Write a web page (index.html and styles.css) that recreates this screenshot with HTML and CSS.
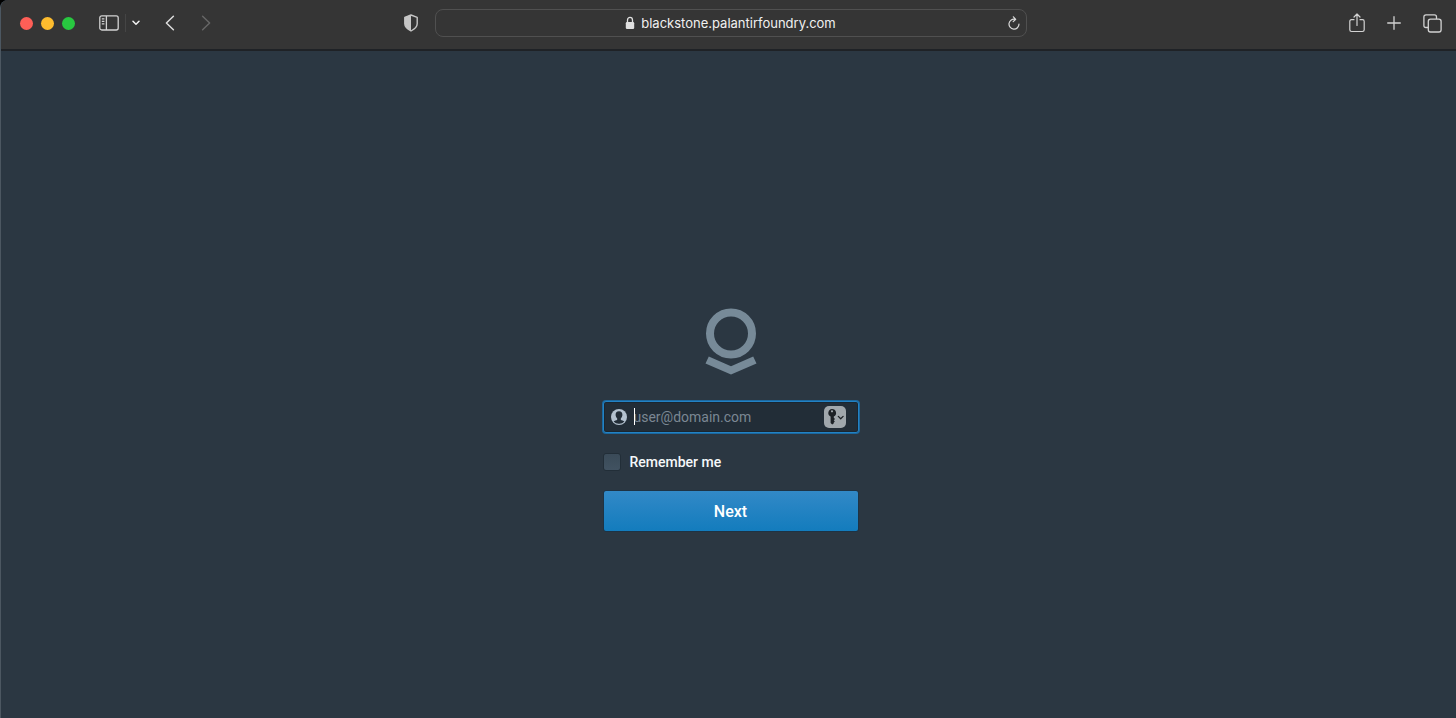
FILE: index.html
```html
<!DOCTYPE html>
<html lang="en">
<head>
<meta charset="utf-8">
<title>blackstone.palantirfoundry.com</title>
<link rel="stylesheet" href="styles.css">
</head>
<body>
<div class="window">
  <header class="toolbar">
    <div class="toolbar-left">
      <div class="lights">
        <button class="light light-close" aria-label="Close"></button>
        <button class="light light-minimize" aria-label="Minimize"></button>
        <button class="light light-zoom" aria-label="Zoom"></button>
      </div>
      <div class="sidebar-group">
        <button class="tool" aria-label="Sidebar">
          <svg width="20" height="16" viewBox="0 0 20 16" fill="none" stroke="#d2d2d2" stroke-width="1.3"><rect x=".8" y=".8" width="18.4" height="14.2" rx="2"/><path d="M7.4 1v14M2.8 3.8h2.6M2.8 6.3h2.6M2.8 8.8h2.6"/></svg>
        </button>
        <span class="divider"></span>
        <button class="tool" aria-label="Tab groups">
          <svg width="8" height="6" viewBox="0 0 8 6" fill="none" stroke="#f0f0f0" stroke-width="1.5" stroke-linecap="round" stroke-linejoin="round"><path d="M1 1.2l3 3 3-3"/></svg>
        </button>
      </div>
      <div class="history">
        <button class="tool" aria-label="Back">
          <svg width="10" height="16" viewBox="0 0 10 16" fill="none" stroke="#dcdcdc" stroke-width="1.5" stroke-linecap="round" stroke-linejoin="round"><path d="M8.4 1.2L1.4 8l7 6.8"/></svg>
        </button>
        <button class="tool" aria-label="Forward">
          <svg width="10" height="16" viewBox="0 0 10 16" fill="none" stroke="#666" stroke-width="1.5" stroke-linecap="round" stroke-linejoin="round"><path d="M1.6 1.2l7 6.8-7 6.8"/></svg>
        </button>
      </div>
      <button class="tool shield" aria-label="Privacy report">
        <svg width="16" height="18" viewBox="0 0 16 18"><path d="M8 1l6.2 2.3v6.5c0 3-2.6 5.3-6.2 7.2-3.6-1.9-6.2-4.2-6.2-7.2V3.3z" fill="none" stroke="#c6c6c6" stroke-width="1.4" stroke-linejoin="round"/><path d="M8 1L1.8 3.3v6.5c0 3 2.6 5.3 6.2 7.2z" fill="#c6c6c6"/></svg>
      </button>
    </div>
    <div class="address">
      <a class="url" href="#">
        <svg width="10" height="14" viewBox="0 0 10 14"><path d="M2.5 6.5V4a2.5 2.7 0 0 1 5 0v2.5" fill="none" stroke="#e0e0e0" stroke-width="1.3"/><rect x=".8" y="6" width="8.4" height="7" rx="1.2" fill="#e0e0e0"/></svg>
        <span>blackstone.palantirfoundry.com</span>
      </a>
      <button class="tool reload" aria-label="Reload">
        <svg width="12" height="14" viewBox="0 0 12 14" fill="none" stroke="#dadada" stroke-width="1.2" stroke-linecap="round" stroke-linejoin="round"><path d="M7.2 3.2A5 5 0 1 0 11 8M5.4.8l2.3 2.5-2.500 2.300"/></svg>
      </button>
    </div>
    <div class="toolbar-right">
      <button class="tool" aria-label="Share">
        <svg width="16" height="20" viewBox="0 0 16 20" fill="none" stroke="#d2d2d2" stroke-width="1.2" stroke-linecap="round" stroke-linejoin="round"><path d="M5 6.7H2.5Q.8 6.7.8 8.4v8.4q0 1.7 1.7 1.7h11q1.7 0 1.7-1.7V8.4q0-1.7-1.7-1.7H11M8 12.5V1.2M5 4l3-3 3 3"/></svg>
      </button>
      <button class="tool" aria-label="New tab">
        <svg width="14" height="14" viewBox="0 0 14 14" fill="none" stroke="#d2d2d2" stroke-width="1.3" stroke-linecap="round"><path d="M7 .7v12.6M.7 7h12.600"/></svg>
      </button>
      <button class="tool" aria-label="Show tabs">
        <svg width="19" height="19" viewBox="0 0 19 19" fill="none" stroke="#d2d2d2" stroke-width="1.3"><rect x="5.3" y="5.2" width="12.8" height="12.8" rx="2.2"/><path d="M5 13.5H3Q.9 13.5.9 11.4V3Q.9.9 3 .9h8.4q2.100 0 2.100 2.100v2"/></svg>
      </button>
    </div>
  </header>
  <main class="page">
    <form class="login">
      <svg class="logo" width="52" height="67" viewBox="0 0 52 67" role="img" aria-label="Palantir"><circle cx="26" cy="25.5" r="21" fill="none" stroke="#778a98" stroke-width="8"/><path d="M3.8 48.500L26 58.2l22.200-9.700 3.300 7L26 66.500.5 55.500z" fill="#778a98"/></svg>
      <div class="field">
        <svg width="16" height="16" viewBox="0 0 16 16"><circle cx="8" cy="8" r="8" fill="#b3c1cf"/><path d="M8 2.200c2.400 0 3.500 1.700 3.400 3.900-.1 1.500-.8 2.700-1.600 3.400v1.300c.8.700 2.700 1 3.600 1.700A6.800 6.800 0 0 1 8 14.800a6.800 6.800 0 0 1-5.400-2.300c.9-.7 2.800-1 3.600-1.700V9.500C5.400 8.800 4.700 7.600 4.600 6.100 4.500 3.900 5.600 2.200 8 2.200z" fill="#222d37"/></svg>
        <div class="entry">
          <input class="email" type="email" placeholder="user@domain.com" aria-label="Username">
          <span class="caret"></span>
        </div>
        <button class="key" type="button" aria-label="Passwords">
          <svg width="22" height="22" viewBox="0 0 22 22"><path fill-rule="evenodd" d="M8 3a4 4 0 0 1 1.800 7.600v1.200l1.200 1.200-1.200 1.300 1 1.200-1.100 1.200v.8L8.200 18.500 6.600 17v-6.400A4 4 0 0 1 8 3zm0 1.200a1.100 1.100 0 1 0 0 2.200 1.100 1.100 0 0 0 0-2.200z" fill="#1c2126"/><path d="M14.300 10.400l2.400 2.300 2.400-2.300" fill="none" stroke="#1c2126" stroke-width="1.300" stroke-linecap="round" stroke-linejoin="round"/></svg>
        </button>
      </div>
      <label class="remember"><input class="check" type="checkbox"><span>Remember me</span></label>
      <button class="next" type="button">Next</button>
    </form>
  </main>
</div>
</body>
</html>
```
FILE: styles.css
```css
* { box-sizing: border-box; }
html, body { height: 100%; }
body { margin: 0; background: #000; }
button { margin: 0; padding: 0; border: 0; background: none; }
svg { display: block; }

.window {
  min-height: 100%;
  display: flex;
  flex-direction: column;
  background: #2b3742;
  border-left: 1px solid #4c5761;
  border-top-left-radius: 8px;
  overflow: hidden;
}
.toolbar {
  height: 51px;
  padding: 0 14px 3px 18px;
  display: grid;
  grid-template-columns: minmax(0, 1fr) minmax(0, 592px) minmax(0, 1fr);
  align-items: center;
  background: #353535;
  border-bottom: 2px solid #1f2226;
}
.toolbar-left { display: flex; align-items: center; padding-left: 1px; }
.lights { display: flex; gap: 8px; }
.light { width: 13px; height: 13px; border-radius: 50%; }
.lights .light + .light { margin: 0; }
.light-close { background: #ff5f57; }
.light-minimize { background: #fdbc2e; }
.light-zoom { background: #28c840; }
.sidebar-group { display: flex; align-items: center; gap: 6px; margin-left: 24px; }
.divider { width: 1px; height: 18px; background: #454545; }
.history { display: flex; gap: 26px; margin-left: 25px; }
.shield { margin-left: auto; margin-right: 16px; }
.address {
  height: 28px;
  padding: 0 6px;
  display: grid;
  grid-template-columns: 12px 1fr 12px;
  align-items: center;
  border: 1px solid #505050;
  border-radius: 8px;
}
.url {
  grid-column: 2;
  display: flex;
  justify-content: center;
  align-items: center;
  gap: 6px;
  color: #f0f0f0;
  font: 13px/20px Inter, "Liberation Sans", sans-serif;
  text-decoration: none;
}
.toolbar-right {
  display: flex;
  justify-content: flex-end;
  align-items: center;
  gap: 22px;
}

.page {
  flex: 1;
  display: flex;
  justify-content: center;
  align-items: center;
  padding: 71px 0 0 4px;
}
.login {
  width: 256px;
  display: flex;
  flex-direction: column;
  font-family: Roboto, "Liberation Sans", sans-serif;
}
.logo { align-self: center; margin-bottom: 26px; }
.field {
  height: 32px;
  padding: 0 12px 0 7px;
  display: flex;
  align-items: center;
  gap: 7px;
  border: 1px solid #2382c4;
  border-radius: 3px;
  background: #222d37;
  box-shadow: 0 0 0 1px #1b689f, inset 0 0 0 1px #1a2630;
}
.entry { position: relative; flex: 1; min-width: 0; display: flex; }
.email {
  width: 100%;
  padding: 0;
  border: 0;
  outline: 0;
  background: none;
  color: #f5f8fa;
  font: 14px/20px Roboto, "Liberation Sans", sans-serif;
}
.email::placeholder { color: #7b8793; opacity: 1; }
.caret { position: absolute; left: 0; top: 1px; width: 1px; height: 17px; background: #fff; }
.key { border-radius: 5px; background: #a0a7ac; }
.remember {
  display: flex;
  align-items: center;
  gap: 9px;
  margin-top: 19px;
  color: #f5f8fa;
  font-size: 14px;
  font-weight: 500;
  line-height: 20px;
}
.check {
  appearance: none;
  width: 18px;
  height: 18px;
  margin: 0;
  border: 1px solid #222e38;
  border-radius: 3px;
  background: linear-gradient(#3a4a58, #415261);
}
.next {
  height: 42px;
  padding-top: 2px;
  margin-top: 18px;
  border: 1px solid #1e3344;
  border-radius: 3px;
  background: linear-gradient(#3289c7, #137cbd);
  color: #fff;
  font: 500 16px/20px Roboto, "Liberation Sans", sans-serif;
}
```
